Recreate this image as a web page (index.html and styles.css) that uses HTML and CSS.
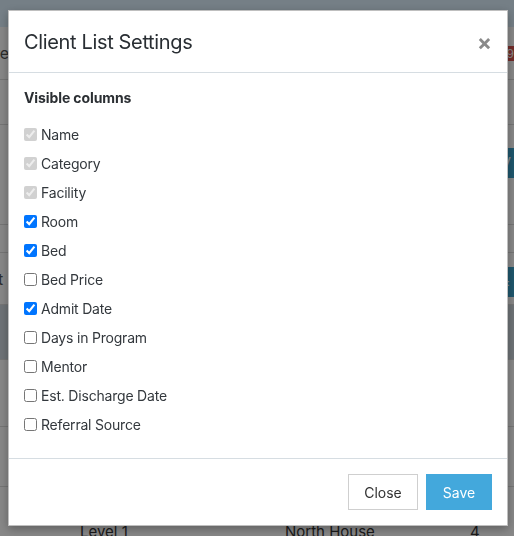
FILE: index.html
```html
<!DOCTYPE html>
<html>
<head>
<meta charset="utf-8">
<link rel="stylesheet" href="styles.css">
</head>
<body>
<div class="page">
  <div class="nav"></div>
  <div class="row r1"><span class="ghost">re</span><span class="badge">9</span></div>
  <div class="row r2"></div>
  <div class="row r3"><span class="btnghost">V</span></div>
  <div class="row r4"></div>
  <div class="row r5"><span class="ghost">it</span><span class="btnghost small">=</span></div>
  <div class="row r6"></div>
  <div class="row r7"></div>
  <div class="row r8"></div>
  <div class="row r9"><span class="c1">Level 1</span><span class="c2">North House</span><span class="c3">4</span></div>
</div>

<div class="backdrop"></div>

<div class="modal">
  <div class="modal-header">
    <h4 class="modal-title">Client List Settings</h4>
    <span class="close">&times;</span>
  </div>
  <div class="modal-body">
    <div class="heading">Visible columns</div>
    <div class="list">
      <label class="opt"><input type="checkbox" checked disabled>Name</label>
      <label class="opt"><input type="checkbox" checked disabled>Category</label>
      <label class="opt"><input type="checkbox" checked disabled>Facility</label>
      <label class="opt"><input type="checkbox" checked>Room</label>
      <label class="opt"><input type="checkbox" checked>Bed</label>
      <label class="opt"><input type="checkbox">Bed Price</label>
      <label class="opt"><input type="checkbox" checked>Admit Date</label>
      <label class="opt"><input type="checkbox">Days in Program</label>
      <label class="opt"><input type="checkbox">Mentor</label>
      <label class="opt"><input type="checkbox">Est. Discharge Date</label>
      <label class="opt"><input type="checkbox">Referral Source</label>
    </div>
  </div>
  <div class="modal-footer">
    <button class="btn btn-default">Close</button>
    <button class="btn btn-primary">Save</button>
  </div>
</div>
</body>
</html>
```

FILE: styles.css
```css
html, body {
  margin: 0;
  padding: 0;
  height: 100%;
  overflow: hidden;
}
body {
  font-family: Inter, "Noto Sans", sans-serif;
  background: #888888;
  color: #212529;
}
.page {
  display: flex;
  flex-direction: column;
  height: 536px;
  background: #fff;
}
.nav {
  height: 27px;
  background: #ddf0fd;
}
.row {
  display: flex;
  align-items: center;
  border-bottom: 1px solid #ddd;
  font-size: 15px;
  color: #555;
}
.r1 { height: 52px; }
.r2 { height: 44px; }
.r3 { height: 99px; }
.r4 { height: 27px; }
.r5 { height: 51px; }
.r6 { height: 54px; background: #d0d9e0; }
.r7 { height: 66px; }
.r8 { height: 59px; }
.r9 { flex: 1; border-bottom: none; color: #333; align-items: flex-end; }
.ghost { margin-left: -6px; width: 40px; font-size: 16px; }
.badge {
  margin-left: auto;
  width: 20px;
  height: 15px;
  background: #d9534f;
  color: #fff;
  font-size: 12px;
  line-height: 15px;
  text-align: right;
}
.btnghost {
  margin-left: auto;
  width: 14px;
  height: 30px;
  background: #3aa3cc;
  color: #fff;
  line-height: 30px;
  font-size: 16px;
  align-self: flex-start;
  margin-top: 23px;
}
.r5 .btnghost { margin-top: 14px; }
.c1 { margin-left: 80px; width: 205px; }
.c2 { width: 185px; }
.r9 span { line-height: 18px; margin-bottom: -5px; }

.backdrop {
  position: fixed;
  inset: 0;
  background: rgba(0, 0, 0, 0.47);
}

.modal {
  position: fixed;
  left: 8px;
  top: 10px;
  width: 498px;
  background: #fff;
  border: 1px solid rgba(0, 0, 0, 0.25);
  box-shadow: 0 3px 9px rgba(0, 0, 0, 0.3);
}
.modal-header {
  display: flex;
  align-items: center;
  padding: 15px;
  border-bottom: 1px solid #d6dde2;
}
.modal-title {
  margin: 0;
  font-size: 20px;
  line-height: 30px;
  font-weight: 400;
  color: #292e33;
  letter-spacing: -0.35px;
  flex: 1;
}
.close {
  font-size: 22px;
  font-weight: 700;
  color: #8a8a8a;
  line-height: 30px;
  margin-right: 0;
  margin-top: 1px;
}
.modal-body {
  padding: 15px 15px 19px;
}
.heading {
  font-size: 14px;
  line-height: 20px;
  font-weight: 700;
  color: #2b2f33;
  margin-bottom: 12px;
  letter-spacing: -0.1px;
}
.list {
  display: flex;
  flex-direction: column;
}
.opt {
  display: flex;
  align-items: center;
  height: 29px;
  font-size: 14px;
  color: #33383d;
  letter-spacing: -0.2px;
}
.opt input {
  margin: 0 4px 0 0;
  width: 13px;
  height: 13px;
}
.modal-footer {
  display: flex;
  justify-content: flex-end;
  gap: 8px;
  padding: 15px;
  border-top: 1px solid #d6dde2;
}
.btn {
  height: 36px;
  font-family: Inter, "Noto Sans", sans-serif;
  font-size: 14px;
  padding: 0;
  border-radius: 0;
  cursor: pointer;
}
.btn-default {
  width: 70px;
  background: #fff;
  border: 1px solid #cfcfcf;
  color: #333;
}
.btn-primary {
  width: 66px;
  background: #43a8dc;
  border: 1px solid #43a8dc;
  color: #fff;
}
```
